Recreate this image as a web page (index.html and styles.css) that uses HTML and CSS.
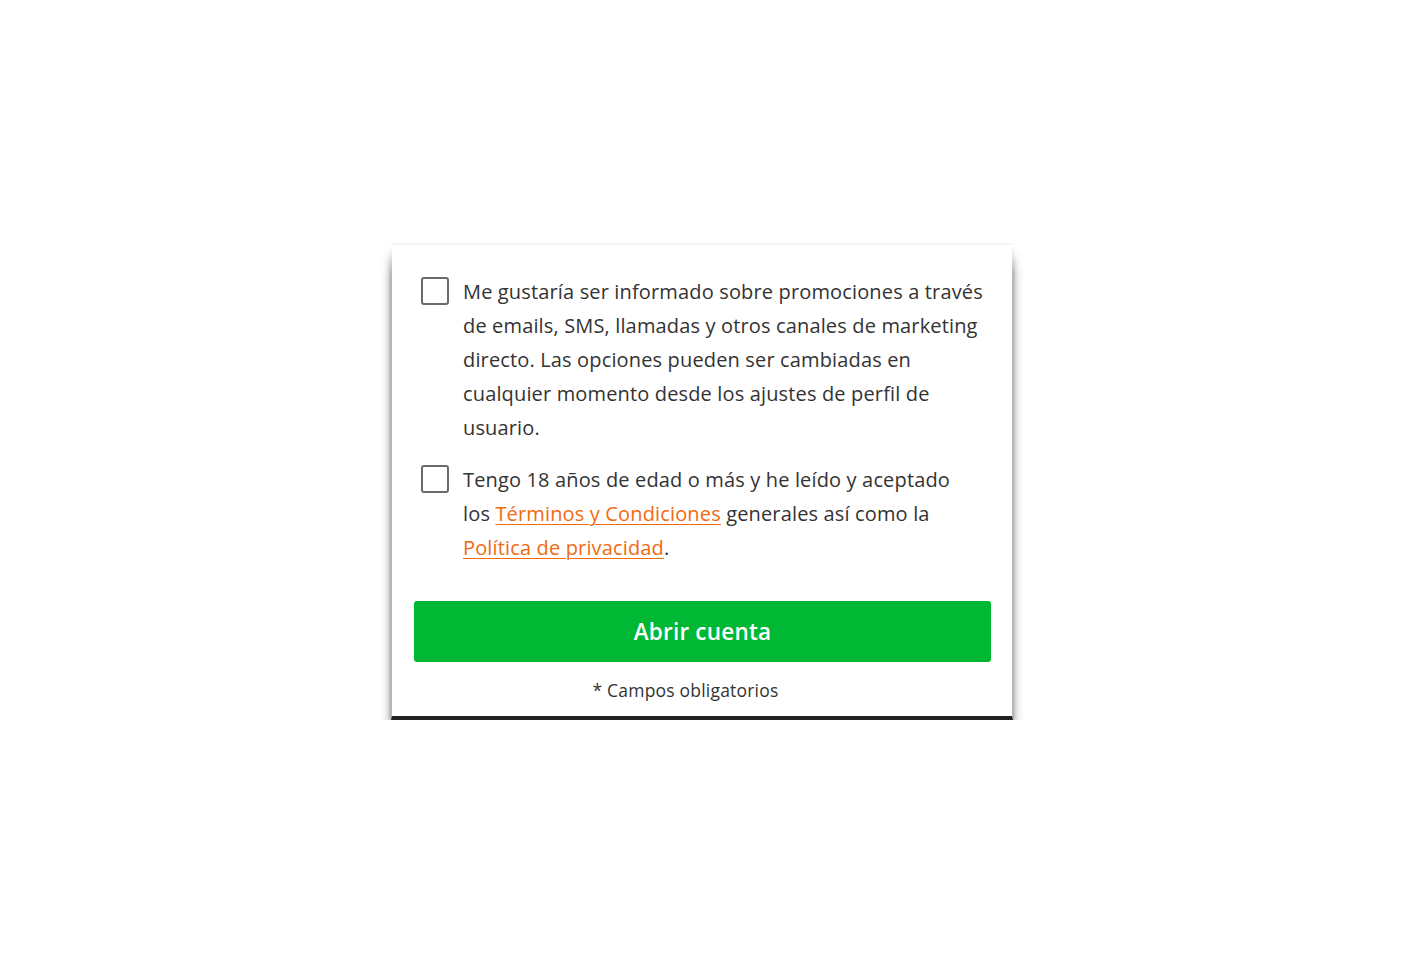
FILE: index.html
```html
<!DOCTYPE html>
<html lang="es">
<head>
<meta charset="utf-8">
<title>Abrir cuenta</title>
<link rel="stylesheet" href="styles.css">
</head>
<body>
<div class="page">
  <div class="card">
    <label class="option">
      <span class="box"></span>
      <span class="text">Me gustaría ser informado sobre promociones a través de emails, SMS, llamadas y otros canales de marketing directo. Las opciones pueden ser cambiadas en cualquier momento desde los ajustes de perfil de usuario.</span>
    </label>
    <label class="option second">
      <span class="box"></span>
      <span class="text">Tengo 18 años de edad o más y he leído y aceptado los&nbsp;<a href="#" class="link">Términos y Condiciones</a> generales así como la <a href="#" class="link">Política de privacidad</a>.</span>
    </label>
    <button class="submit" type="button">Abrir cuenta</button>
    <p class="note">* Campos obligatorios</p>
  </div>
</div>
</body>
</html>
```
FILE: styles.css
```css
html, body {
  margin: 0;
  padding: 0;
  background: #ffffff;
}
body {
  font-family: "Open Sans", "Noto Sans", sans-serif;
  color: #333333;
}
.page {
  display: flex;
  justify-content: center;
  padding-top: 247px;
}
.card {
  position: relative;
  width: 577px;
  padding: 28px 21px 13px 22px;
  background: #fff;
  border-left: 1px solid #b8b8b8;
  border-right: 1px solid #b8b8b8;
  border-bottom: 4px solid #222;
  box-shadow: 0 6px 10px rgba(0,0,0,0.42), -1px 0 4px rgba(0,0,0,0.14), 1px 0 4px rgba(0,0,0,0.14);
}
.card::before {
  content: "";
  position: absolute;
  left: -12px;
  right: -12px;
  top: -2px;
  height: 30px;
  background: linear-gradient(#fff 0%, rgba(255,255,255,0) 100%);
}
.option {
  display: flex;
  align-items: flex-start;
  gap: 14px;
  padding-left: 7px;
  font-size: 20px;
  line-height: 34px;
  letter-spacing: 0.15px;
  color: #333;
}
.option.second {
  margin-top: 18px;
}
.box {
  flex: none;
  width: 24px;
  height: 24px;
  margin-top: 2px;
  border: 2px solid #6a6a6a;
  border-radius: 3px;
  background: #fff;
}
.text {
  flex: 1;
}
.link {
  color: #f26a10;
  text-decoration: underline;
  text-underline-offset: 3px;
  text-decoration-thickness: 1px;
}
.submit {
  display: block;
  width: 100%;
  height: 61px;
  margin-top: 36px;
  border: none;
  border-radius: 3px;
  background: #00b834;
  color: #fff;
  font-family: "Open Sans", "Noto Sans", sans-serif;
  font-size: 22.5px;
  font-weight: 600;
  letter-spacing: 0.2px;
  cursor: pointer;
}
.note {
  margin: 15px 0 0;
  text-align: center;
  font-size: 17.5px;
  line-height: 26px;
  letter-spacing: 0.2px;
  color: #333;
  padding-right: 34px;
}
```
